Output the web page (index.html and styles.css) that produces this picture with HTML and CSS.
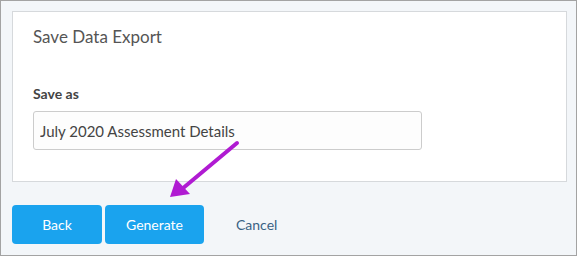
FILE: index.html
```html
<!DOCTYPE html>
<html lang="en">

<head>
    <meta charset="UTF-8">
    <meta name="viewport" content="width=device-width, initial-scale=1.0">
    <title>Save Data Export</title>
    <link rel="stylesheet" href="styles.css">
</head>

<body>
    <div class="frame">
        <div class="card">
            <h2 class="title">Save Data Export</h2>
            <form class="export-form">
                <label for="saveAs" class="field-label">Save as</label>
                <input type="text" id="saveAs" class="field-input" value="July 2020 Assessment Details">
            </form>
        </div>

        <div class="actions">
            <button type="button" class="btn btn-back">Back</button>
            <button type="button" class="btn btn-generate">Generate</button>
            <a href="#" class="link-cancel">Cancel</a>
        </div>

        <!-- callout arrow pointing at Generate -->
        <svg class="callout" width="80" height="64" viewBox="0 0 80 64">
            <line x1="71" y1="6" x2="16" y2="52" stroke="#b01bd2" stroke-width="4" stroke-linecap="round" />
            <polygon points="4,60 10,42 24,57" fill="#b01bd2" />
        </svg>
    </div>
</body>

</html>
```

FILE: styles.css
```css
/* Page frame and card */
* {
    box-sizing: border-box;
}

body {
    margin: 0;
    font-family: Lato, "Open Sans", sans-serif;
    background-color: #fff;
}

.frame {
    position: relative;
    width: 577px;
    height: 256px;
    padding: 10px 9px 0 11px;
    background-color: #f3f6f9;
    border: 1px solid #a3a3a3;
}

.card {
    height: 171px;
    padding: 14px 20px 0 20px;
    background-color: #fff;
    border: 1px solid #d6d9dc;
}

.title {
    margin: 0 0 38px;
    font-size: 17px;
    font-weight: normal;
    color: #555;
}

.export-form {
    display: flex;
    flex-direction: column;
}

.field-label {
    margin-bottom: 9px;
    font-size: 14px;
    font-weight: bold;
    color: #444;
}

.field-input {
    width: 389px;
    height: 39px;
    padding: 0 6px;
    border: 1px solid #ccc;
    border-radius: 3px;
    background-color: #fdfdfd;
    font-family: inherit;
    font-size: 15px;
    color: #444;
}

/* Button row */
.actions {
    display: flex;
    align-items: center;
    gap: 3px;
    margin-top: 23px;
}

.btn {
    height: 39px;
    border: none;
    border-radius: 4px;
    background-color: #1aa3ee;
    color: #fff;
    font-family: inherit;
    font-size: 14px;
    cursor: pointer;
}

.btn-back {
    width: 90px;
}

.btn-generate {
    width: 99px;
}

.link-cancel {
    margin-left: 29px;
    font-size: 14px;
    color: #3a6284;
    text-decoration: none;
}

.callout {
    position: absolute;
    left: 165px;
    top: 136px;
}
```
